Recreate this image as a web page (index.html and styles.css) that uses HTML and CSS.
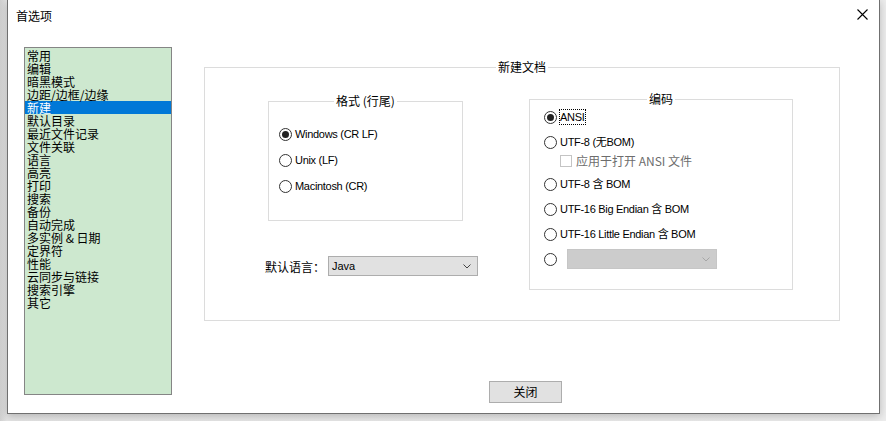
FILE: index.html
```html
<!DOCTYPE html>
<html lang="zh-CN">
<head>
<meta charset="utf-8">
<title>首选项</title>
<link rel="stylesheet" href="styles.css">
</head>
<body>
<div class="window">
  <div class="titlebar">
    <span class="title">首选项</span>
    <svg class="close" width="11" height="11" viewBox="0 0 11 11"><path d="M0.5 0.5 L10.5 10.5 M10.5 0.5 L0.5 10.5" stroke="#000" stroke-width="1.1" fill="none"/></svg>
  </div>
  <div class="content">
    <ul class="list">
      <li>常用</li>
      <li>编辑</li>
      <li>暗黑模式</li>
      <li>边距/边框/边缘</li>
      <li class="sel">新建</li>
      <li>默认目录</li>
      <li>最近文件记录</li>
      <li>文件关联</li>
      <li>语言</li>
      <li>高亮</li>
      <li>打印</li>
      <li>搜索</li>
      <li>备份</li>
      <li>自动完成</li>
      <li>多实例 &amp; 日期</li>
      <li>定界符</li>
      <li>性能</li>
      <li>云同步与链接</li>
      <li>搜索引擎</li>
      <li>其它</li>
    </ul>
    <div class="main">
      <div class="group outer">
        <div class="gtitle">新建文档</div>
        <div class="outer-row">
          <div class="leftcol">
            <div class="group fmt">
              <div class="gtitle">格式 (行尾)</div>
              <div class="fmt-rows">
                <div class="radio"><span class="circle on"></span><span class="lab">Windows (CR LF)</span></div>
                <div class="radio"><span class="circle"></span><span class="lab">Unix (LF)</span></div>
                <div class="radio"><span class="circle"></span><span class="lab">Macintosh (CR)</span></div>
              </div>
            </div>
            <div class="langrow">
              <span class="lbl">默认语言：</span>
              <div class="select">
                <span class="seltext">Java</span>
                <svg class="chev" width="8" height="5" viewBox="0 0 8 5"><path d="M0.5 0.5 L4 4 L7.5 0.5" stroke="#444" stroke-width="1" fill="none"/></svg>
              </div>
            </div>
          </div>
          <div class="group enc">
            <div class="gtitle">编码</div>
            <div class="enc-rows">
              <div class="erow"><span class="circle on"></span><span class="lab focus">ANSI</span></div>
              <div class="erow"><span class="circle"></span><span class="lab">UTF-8 (无BOM)</span></div>
              <div class="crow"><span class="cbox"></span><span class="lab dis">应用于打开 ANSI 文件</span></div>
              <div class="erow"><span class="circle"></span><span class="lab">UTF-8 含 BOM</span></div>
              <div class="erow"><span class="circle"></span><span class="lab">UTF-16 Big Endian 含 BOM</span></div>
              <div class="erow"><span class="circle"></span><span class="lab">UTF-16 Little Endian 含 BOM</span></div>
              <div class="erow"><span class="circle"></span>
                <div class="combo"><svg class="chev" width="8" height="5" viewBox="0 0 8 5"><path d="M0.5 0.5 L4 4 L7.5 0.5" stroke="#a6a6a6" stroke-width="1" fill="none"/></svg></div>
              </div>
            </div>
          </div>
        </div>
      </div>
      <button class="btn">关闭</button>
    </div>
  </div>
</div>
</body>
</html>
```

FILE: styles.css
```css
html, body {
  margin: 0;
  padding: 0;
}
body {
  width: 886px;
  height: 421px;
  overflow: hidden;
  background: linear-gradient(to right, #cfcfcf 0, #e4e4e4 7px, #ececec 100%);
  font-family: "Liberation Sans", Arial, sans-serif;
  color: #000;
}
.window {
  margin-left: 7px;
  width: 873px;
  height: 414px;
  box-sizing: border-box;
  background: #fff;
  border: 1px solid #707070;
  border-top: none;
  box-shadow: 0 2px 8px rgba(0, 0, 0, 0.22);
  display: flex;
  flex-direction: column;
}
.titlebar {
  height: 32px;
  display: flex;
  align-items: center;
  justify-content: space-between;
  padding: 0 11px 0 8px;
}
.title {
  font-family: "Noto Sans CJK SC", sans-serif;
  font-size: 12px;
  line-height: 16px;
}
.close {
  display: block;
  margin-top: -4px;
}
.content {
  display: flex;
  padding: 15px 0 0 16px;
}
.list {
  list-style: none;
  margin: 0;
  padding: 1px 0 0 0;
  width: 148px;
  height: 348px;
  box-sizing: border-box;
  border: 1px solid #858585;
  background: #cde8cf;
  font-family: "Noto Sans CJK SC", sans-serif;
  font-size: 12px;
}
.list li {
  height: 13px;
  line-height: 13px;
  padding-left: 2px;
  white-space: nowrap;
}
.list li.sel {
  background: #0078d7;
  color: #fff;
}
.main {
  display: flex;
  flex-direction: column;
  align-items: flex-start;
  padding: 20px 0 0 32px;
}
.group {
  border: 1px solid #dcdcdc;
  box-sizing: border-box;
  display: flex;
  flex-direction: column;
}
.gtitle {
  align-self: center;
  background: #fff;
  padding: 0 2px;
  font-family: "Noto Sans CJK SC", sans-serif;
  font-size: 12px;
  line-height: 16px;
  height: 16px;
  margin-top: -9px;
  margin-bottom: -7px;
  white-space: nowrap;
}
.outer {
  width: 636px;
  height: 254px;
}
.outer-row {
  display: flex;
  align-items: flex-start;
  padding-left: 60px;
}
.leftcol {
  width: 213px;
  margin-top: 33px;
  display: flex;
  flex-direction: column;
}
.fmt {
  margin-left: 3px;
  width: 195px;
  height: 120px;
}
.fmt-rows {
  padding: 19px 0 0 10px;
}
.radio {
  display: flex;
  align-items: center;
  height: 26px;
}
.circle {
  flex: none;
  width: 13px;
  height: 13px;
  box-sizing: border-box;
  border: 1px solid #333;
  border-radius: 50%;
  background: #fff;
  margin-right: 3px;
  display: flex;
  align-items: center;
  justify-content: center;
}
.circle.on::after {
  content: "";
  width: 7px;
  height: 7px;
  border-radius: 50%;
  background: #222;
}
.lab {
  font-family: "Liberation Sans", "Noto Sans CJK SC", sans-serif;
  font-size: 11px;
  letter-spacing: -0.3px;
  line-height: 14px;
  white-space: nowrap;
}
.lab.focus {
  outline: 1px dotted #000;
  outline-offset: 0;
  padding: 0 1px 0 0;
}
.lab.dis {
  color: #6d6d6d;
  font-family: "Noto Sans CJK SC", sans-serif;
  font-size: 12px;
  letter-spacing: 0;
}
.langrow {
  margin-top: 35px;
  display: flex;
  align-items: center;
  height: 20px;
}
.lbl {
  width: 63px;
  flex: none;
  font-family: "Noto Sans CJK SC", sans-serif;
  font-size: 12px;
  white-space: nowrap;
}
.select {
  width: 150px;
  height: 20px;
  box-sizing: border-box;
  border: 1px solid #adadad;
  background: #e1e1e1;
  display: flex;
  align-items: center;
  justify-content: space-between;
  padding: 0 6px 0 3px;
}
.seltext {
  font-size: 11px;
}
.chev {
  display: block;
}
.enc {
  margin-left: 51px;
  margin-top: 31px;
  width: 264px;
  height: 191px;
}
.enc-rows {
  display: flex;
  flex-direction: column;
  gap: 5px;
  padding: 7px 0 0 14px;
}
.erow {
  display: flex;
  align-items: center;
  height: 20px;
}
.crow {
  display: flex;
  align-items: center;
  height: 16px;
  margin-top: -4px;
  padding-left: 16px;
}
.cbox {
  width: 12px;
  height: 12px;
  box-sizing: border-box;
  border: 1px solid #c4c4c4;
  background: #fff;
  margin-right: 4px;
}
.combo {
  margin-left: 7px;
  width: 150px;
  height: 20px;
  box-sizing: border-box;
  border: 1px solid #c6c6c6;
  background: #cccccc;
  display: flex;
  align-items: center;
  justify-content: flex-end;
  padding-right: 6px;
}
.btn {
  margin: 60px 0 0 285px;
  width: 73px;
  height: 22px;
  box-sizing: border-box;
  border: 1px solid #adadad;
  background: #e1e1e1;
  font-family: "Noto Sans CJK SC", sans-serif;
  font-size: 12px;
  color: #000;
  padding: 0;
  line-height: 18px;
}
```
